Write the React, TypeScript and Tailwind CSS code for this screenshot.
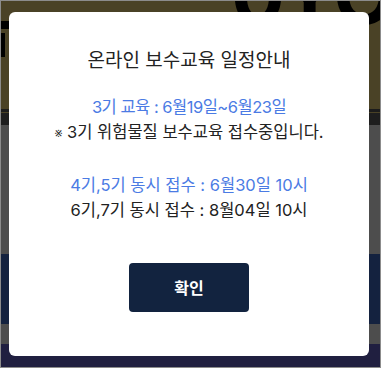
import React from "react";

export default function App() {
  const font = { fontFamily: '"Inter", "Noto Sans CJK KR", "Noto Sans", sans-serif' };
  return (
    <div className="relative w-[381px] h-[368px] overflow-hidden border border-[#8c8c8c] bg-[#4d4d4d]" style={font}>
      {/* background page (dimmed) */}
      <div className="flex flex-col w-full">
        <div className="h-[108px] bg-[#4a4226] overflow-hidden relative">
          <div className="absolute left-[230px] top-[-46px] text-[80px] font-bold leading-none text-black whitespace-nowrap tracking-[-2px]">0YO</div>
          <div className="absolute left-[-6px] top-[20px] w-[14px] h-[8px] bg-black" />
          <div className="absolute left-[-6px] top-[32px] w-[10px] h-[24px] bg-black" />
        </div>
        <div className="h-[3px] bg-[#1c1c1c]" />
        <div className="h-[1px] bg-[#4a4226]" />
        <div className="h-[12px] bg-[#1e1e1e]" />
        <div className="h-[129px] bg-[#4d4d4d]" />
        <div className="h-[70px] bg-[#14223f]" />
        <div className="h-[20px] bg-[#4d4d4d]" />
        <div className="h-[30px] bg-[#201f40]" />
      </div>

      {/* modal */}
      <div className="absolute left-[8px] top-[11px] w-[360px] h-[344px] bg-white rounded-[6px] flex flex-col items-center">
        <div className="mt-[37px] text-[19px] leading-[24px] text-[#222] whitespace-nowrap">온라인 보수교육 일정안내</div>
        <div className="mt-[22px] text-[16.5px] leading-[25px] text-[#4b7be4] whitespace-nowrap tracking-[-0.5px]">3기 교육 : 6월19일~6월23일</div>
        <div className="text-[16.5px] leading-[25px] text-[#222] whitespace-nowrap"><span className="text-[14px] font-light">※</span> 3기 위험물질 보수교육 접수중입니다.</div>
        <div className="mt-[28px] text-[16.5px] leading-[25px] text-[#4b7be4] whitespace-nowrap">4기,5기 동시 접수 : 6월30일 10시</div>
        <div className="text-[16.5px] leading-[25px] text-[#222] whitespace-nowrap">6기,7기 동시 접수 : 8월04일 10시</div>
        <button className="mt-[40px] w-[120px] h-[49px] rounded-[4px] bg-[#12233f] text-white text-[16px] font-bold">확인</button>
      </div>
    </div>
  );
}
